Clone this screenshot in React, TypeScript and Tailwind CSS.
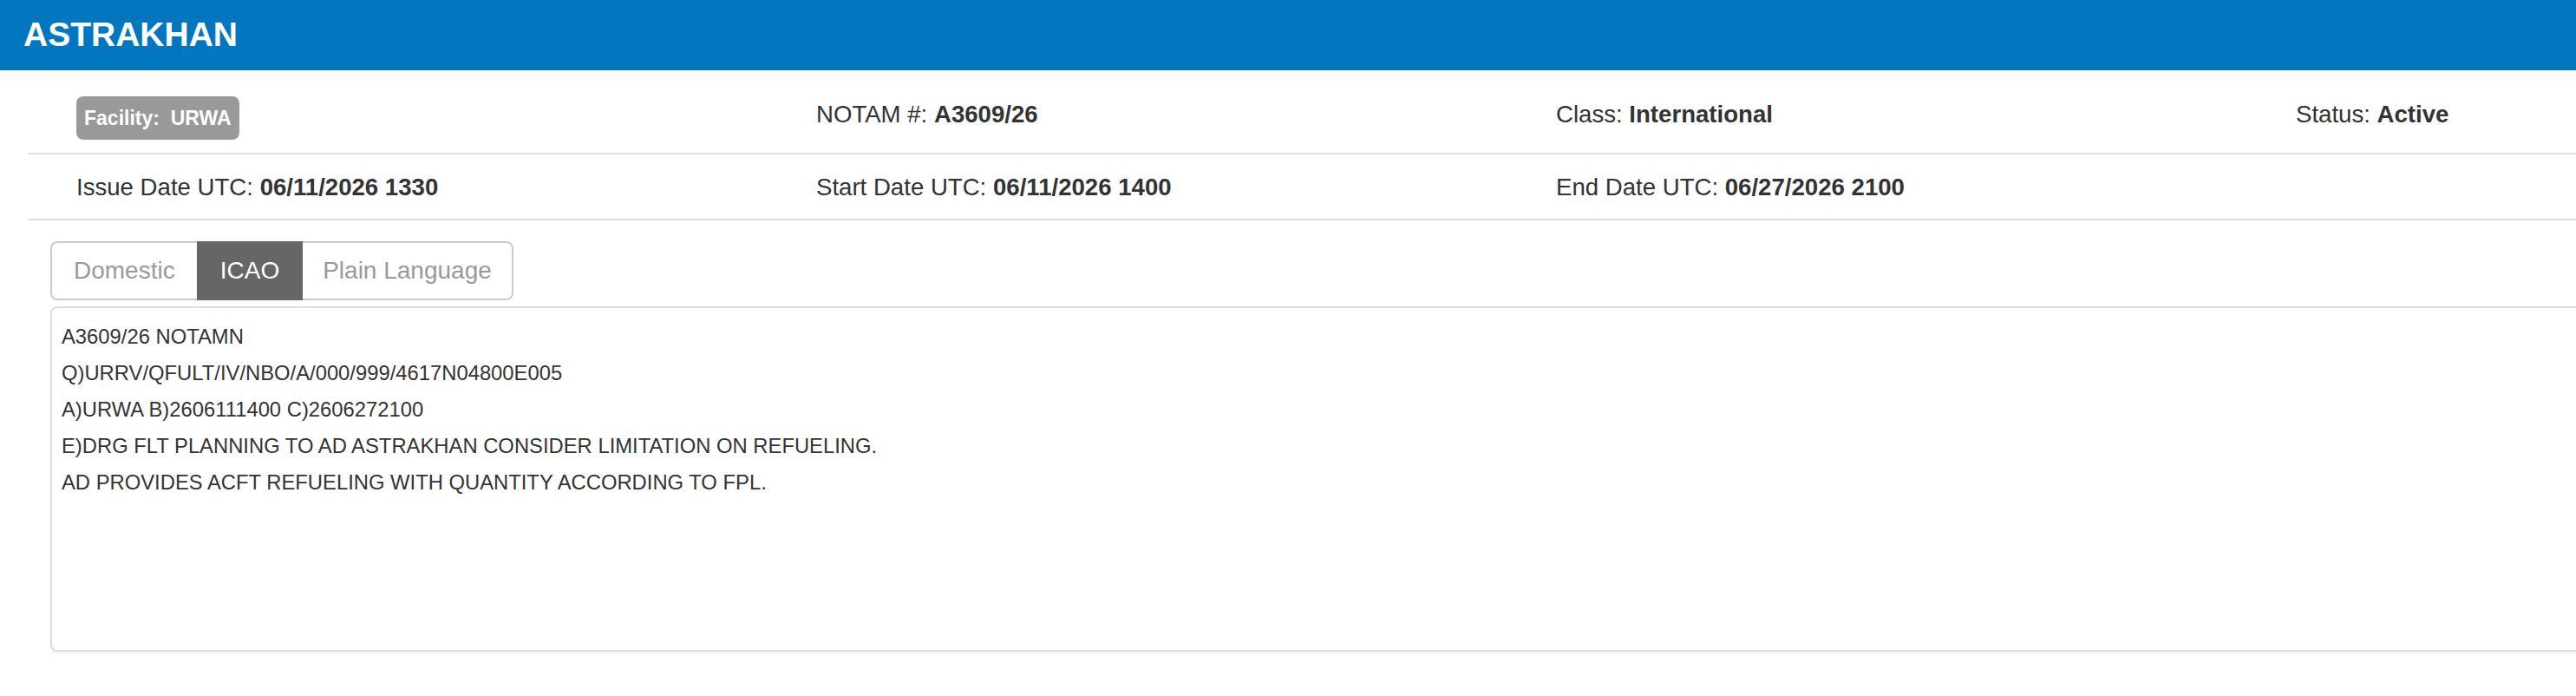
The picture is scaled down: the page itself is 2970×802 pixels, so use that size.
import React from "react";

const lines = [
  "A3609/26 NOTAMN",
  "Q)URRV/QFULT/IV/NBO/A/000/999/4617N04800E005",
  "A)URWA B)2606111400 C)2606272100",
  "E)DRG FLT PLANNING TO AD ASTRAKHAN CONSIDER LIMITATION ON REFUELING.",
  "AD PROVIDES ACFT REFUELING WITH QUANTITY ACCORDING TO FPL.",
];

function Field({ label, value }: { label: string; value: string }) {
  return (
    <div className="pl-[56px] text-[27.6px] leading-[41px] text-[#333] whitespace-nowrap">
      {label} <span className="font-bold">{value}</span>
    </div>
  );
}

export default function App() {
  return (
    <div className="w-[2970px] h-[802px] overflow-hidden bg-white font-['Liberation_Sans',Arial,sans-serif]">
      <div className="h-[81px] bg-[#0277c0] flex items-center pl-[27px] pb-[3px]">
        <h1 className="text-white font-bold text-[39px] leading-none">ASTRAKHAN</h1>
      </div>

      <div className="ml-[32px] w-[3412px]">
        <div className="grid grid-cols-[repeat(4,853px)] pt-[30px] pb-[15px] border-b-2 border-[#ddd]">
          <div className="pl-[56px]">
            <span className="inline-flex h-[50px] items-center px-[9px] rounded-[8px] bg-[#999] text-white font-bold text-[23px] whitespace-pre">
              {"Facility:  URWA"}
            </span>
          </div>
          <Field label="NOTAM #:" value="A3609/26" />
          <Field label="Class:" value="International" />
          <Field label="Status:" value="Active" />
        </div>
        <div className="grid grid-cols-[repeat(4,853px)] pt-[17px] pb-[16px] border-b-2 border-[#ddd]">
          <Field label="Issue Date UTC:" value="06/11/2026 1330" />
          <Field label="Start Date UTC:" value="06/11/2026 1400" />
          <Field label="End Date UTC:" value="06/27/2026 2100" />
          <div />
        </div>
      </div>

      <div className="ml-[58px] mt-[24px] flex">
        <button className="h-[68px] px-[25px] flex items-center text-[28px] text-[#999] bg-white border-2 border-r-0 border-[#ccc] rounded-l-[8px]">
          Domestic
        </button>
        <button className="h-[68px] px-[25px] flex items-center text-[28px] text-white bg-[#666] border-2 border-[#666]">
          ICAO
        </button>
        <button className="h-[68px] px-[23px] flex items-center text-[28px] text-[#999] bg-white border-2 border-l-0 border-[#ccc] rounded-r-[8px]">
          Plain Language
        </button>
      </div>

      <div className="ml-[58px] mt-[7px] w-[3000px] h-[398px] border-2 border-[#ddd] rounded-[8px] shadow-[0_2px_3px_rgba(0,0,0,0.06)] pt-[12px] pl-[11px]">
        {lines.map((l) => (
          <div key={l} className="text-[23.8px] leading-[42px] text-[#333] whitespace-nowrap">
            {l}
          </div>
        ))}
      </div>
    </div>
  );
}
